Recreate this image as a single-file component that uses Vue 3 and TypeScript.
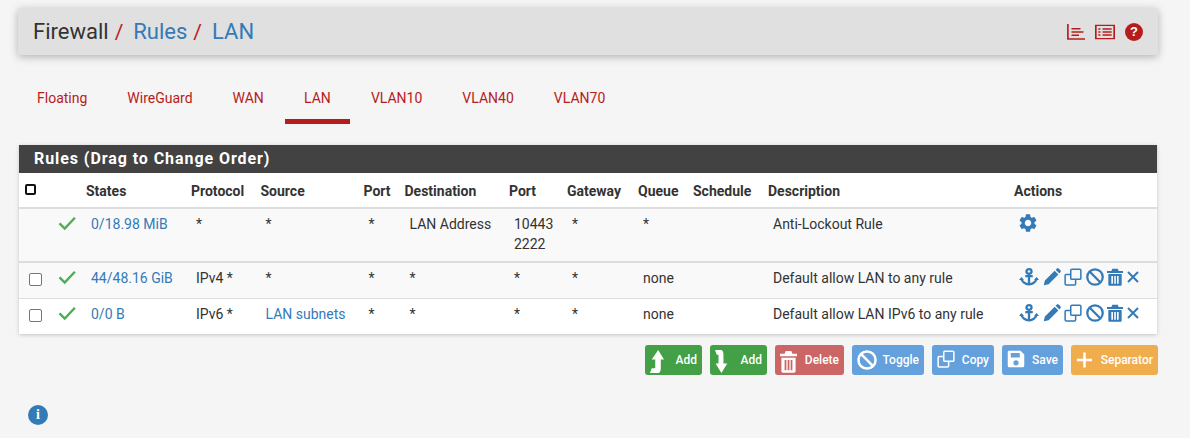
<script setup lang="ts">
interface Rule {
  box: boolean; states: string; proto: string; source: string; sourceLink: boolean; port: string;
  dest: string; dport: string[]; gateway: string; queue: string; desc: string; actions: string[];
}
const headers = ['', '', 'States', 'Protocol', 'Source', 'Port', 'Destination', 'Port', 'Gateway', 'Queue', 'Schedule', 'Description', 'Actions'];
const widths = [33, 29, 105, 69.5, 103, 41, 104.5, 58, 71, 55, 75, 246, 148];
const full = ['anchor', 'pencil', 'clone', 'ban', 'trash', 'times'];
const rules: Rule[] = [
  { box: false, states: '0/18.98 MiB', proto: '*', source: '*', sourceLink: false, port: '*', dest: 'LAN Address', dport: ['10443', '2222'], gateway: '*', queue: '*', desc: 'Anti-Lockout Rule', actions: ['cog'] },
  { box: true, states: '44/48.16 GiB', proto: 'IPv4 *', source: '*', sourceLink: false, port: '*', dest: '*', dport: ['*'], gateway: '*', queue: 'none', desc: 'Default allow LAN to any rule', actions: full },
  { box: true, states: '0/0 B', proto: 'IPv6 *', source: 'LAN subnets', sourceLink: true, port: '*', dest: '*', dport: ['*'], gateway: '*', queue: 'none', desc: 'Default allow LAN IPv6 to any rule', actions: full },
];
const tabs = ['Floating', 'WireGuard', 'WAN', 'LAN', 'VLAN10', 'VLAN40', 'VLAN70'];
const buttons = [
  { label: 'Add', icon: 'up', kind: 'green', gapw: 57 },
  { label: 'Add', icon: 'down', kind: 'green', gapw: 57 },
  { label: 'Delete', icon: 'trash', kind: 'red', gapw: 69 },
  { label: 'Toggle', icon: 'ban', kind: 'blue', gapw: 72 },
  { label: 'Copy', icon: 'clone', kind: 'blue', gapw: 62 },
  { label: 'Save', icon: 'save', kind: 'blue', gapw: 61 },
  { label: 'Separator', icon: 'plus', kind: 'orange', gapw: 87 },
];
</script>

<template>
  <div class="page">
    <svg class="defs" aria-hidden="true">
      <symbol id="i-cog" viewBox="2 2 20 20"><path fill="currentColor" d="M19.14 12.94c.04-.3.06-.61.06-.94 0-.32-.02-.64-.07-.94l2.03-1.58c.18-.14.23-.41.12-.61l-1.92-3.32c-.12-.22-.37-.29-.59-.22l-2.39.96c-.5-.38-1.03-.7-1.62-.94l-.36-2.54c-.04-.24-.24-.41-.48-.41h-3.84c-.24 0-.43.17-.47.41l-.36 2.54c-.59.24-1.13.57-1.62.94l-2.39-.96c-.22-.08-.47 0-.59.22L2.74 8.87c-.12.21-.08.47.12.61l2.03 1.58c-.05.3-.09.63-.09.94s.02.64.07.94l-2.03 1.58c-.18.14-.23.41-.12.61l1.92 3.32c.12.22.37.29.59.22l2.39-.96c.5.38 1.03.7 1.62.94l.36 2.54c.05.24.24.41.48.41h3.84c.24 0 .44-.17.47-.41l.36-2.54c.59-.24 1.13-.56 1.62-.94l2.39.96c.22.08.47 0 .59-.22l1.92-3.32c.12-.22.07-.47-.12-.61l-2.01-1.58zM12 15.6c-1.98 0-3.6-1.62-3.6-3.6s1.62-3.6 3.6-3.6 3.6 1.62 3.6 3.6-1.62 3.6-3.6 3.6z"/></symbol>
      <symbol id="i-anchor" viewBox="0 0 24 24" preserveAspectRatio="none"><g fill="none" stroke="currentColor" stroke-width="2.800"><circle cx="12" cy="4.500" r="3"/><path d="M12 7v15M7.500 10.800h9"/><path d="M2.800 14c.5 4.500 5 7.500 9.200 8 4.200-.5 8.700-3.500 9.200-8"/></g><path fill="currentColor" d="M0 16 2.800 12 6 16zM18 16 21.200 12 24 16z"/></symbol>
      <symbol id="i-pencil" viewBox="0 0 24 24"><path fill="currentColor" d="M1 23l1.500-6.500L15.500 3.500l5 5L7.500 21.500zM16.800 2.200 18.500.8c.8-.7 1.800-.7 2.500 0l2.200 2.200c.7.7.7 1.800 0 2.500l-1.400 1.700z"/></symbol>
      <symbol id="i-clone" viewBox="0 0 24 24"><g fill="none" stroke="currentColor" stroke-width="2"><rect x="9" y="1.500" width="13.500" height="13.500" rx="1.500"/><path d="M9 8.500H3c-.8 0-1.500.7-1.500 1.500v11c0 .8.7 1.500 1.500 1.500h11c.8 0 1.500-.7 1.500-1.500v-6"/></g></symbol>
      <symbol id="i-ban" viewBox="0 0 24 24"><g fill="none" stroke="currentColor" stroke-width="3"><circle cx="12" cy="12" r="10.300"/><path d="M5 5l14 14"/></g></symbol>
      <symbol id="i-trash" viewBox="0 0 24 24" preserveAspectRatio="none"><path fill="currentColor" fill-rule="evenodd" d="M8 1h8l1.500 3H24v2.500H0V4h6.500zM2 8h20v14c0 1-.8 1.800-1.800 1.800H3.800C2.800 23.800 2 23 2 22zM6.500 10.500v10.500h2.500V10.500zM10.800 10.500v10.500h2.500V10.500zM15 10.500v10.500h2.500V10.500z"/></symbol>
      <symbol id="i-times" viewBox="0 0 24 24"><path fill="none" stroke="currentColor" stroke-width="4" d="M2 2l20 20M22 2L2 22"/></symbol>
      <symbol id="i-check" viewBox="0 0 24 24"><path fill="none" stroke="currentColor" stroke-width="3.200" d="M2 12.500l7 7L22.500 5"/></symbol>
      <symbol id="i-up" viewBox="0 0 24 24" preserveAspectRatio="none"><path fill="currentColor" d="M14 0l10 10h-5.500v9c0 3-2 5-4.500 5H0l3-5h6V10H3z"/></symbol>
      <symbol id="i-down" viewBox="0 0 24 24" preserveAspectRatio="none"><path fill="currentColor" d="M0 0h10c3 0 4.500 2 4.500 5v9H21L11 24 1 14h5V5H3z"/></symbol>
      <symbol id="i-save" viewBox="0 0 24 24"><path fill="currentColor" fill-rule="evenodd" d="M3 1h15l5 5v15c0 1.200-.8 2-2 2H3c-1.200 0-2-.8-2-2V3c0-1.200.8-2 2-2zM5 4v6h12V4zM12 13.500a3.500 3.500 0 1 0 0 7 3.500 3.500 0 0 0 0-7z"/></symbol>
      <symbol id="i-plus" viewBox="0 0 24 24"><path fill="none" stroke="currentColor" stroke-width="4" d="M12 0v24M0 12h24"/></symbol>
      <symbol id="i-chart" viewBox="0 0 24 24" preserveAspectRatio="none"><path fill="none" stroke="currentColor" stroke-width="2.200" d="M1.200 0v22.500H24M6 7h12M6 12h16M6 17h10"/></symbol>
      <symbol id="i-list" viewBox="0 0 24 24" preserveAspectRatio="none"><path fill="none" stroke="currentColor" stroke-width="2" d="M1 2h22v20H1zM9 7.500h11M9 12h11M9 16.500h11M4 7.500h2.500M4 12h2.500M4 16.500h2.500"/></symbol>
    </svg>

    <header class="bar">
      <h1 class="crumbs">
        <span class="dark">Firewall</span><span class="sep">/</span>
        <a class="crumb">Rules</a><span class="sep">/</span>
        <a class="crumb">LAN</a>
      </h1>
      <div class="bar-icons">
        <svg class="ic-chart"><use href="#i-chart" /></svg>
        <svg class="ic-list"><use href="#i-list" /></svg>
        <span class="help">?</span>
      </div>
    </header>

    <nav class="tabs">
      <a v-for="t in tabs" :key="t" class="tab" :class="{ active: t === 'LAN' }">{{ t }}</a>
    </nav>

    <section class="panel">
      <h2 class="panel-title">Rules (Drag to Change Order)</h2>
      <table class="rules">
        <colgroup><col v-for="(w, i) in widths" :key="i" :style="{ width: w + 'px' }" /></colgroup>
        <thead>
          <tr>
            <th v-for="(h, i) in headers" :key="i">
              <span v-if="i === 0" class="box-head"></span>
              <template v-else>{{ h }}</template>
            </th>
          </tr>
        </thead>
        <tbody>
          <tr v-for="r in rules" :key="r.states">
            <td class="box-cell"><span v-if="r.box" class="box"></span></td>
            <td class="check-cell"><svg class="check"><use href="#i-check" /></svg></td>
            <td><a class="link">{{ r.states }}</a></td>
            <td>{{ r.proto }}</td>
            <td><a v-if="r.sourceLink" class="link">{{ r.source }}</a><template v-else>{{ r.source }}</template></td>
            <td>{{ r.port }}</td>
            <td>{{ r.dest }}</td>
            <td><div v-for="p in r.dport" :key="p">{{ p }}</div></td>
            <td>{{ r.gateway }}</td>
            <td>{{ r.queue }}</td>
            <td></td>
            <td>{{ r.desc }}</td>
            <td class="actions">
              <div class="action-row">
                <svg v-for="a in r.actions" :key="a" class="act" :class="'act-' + a"><use :href="'#i-' + a" /></svg>
              </div>
            </td>
          </tr>
        </tbody>
      </table>
    </section>

    <div class="btns">
      <button v-for="(b, i) in buttons" :key="i" class="btn" :class="b.kind" :style="{ width: b.gapw + 'px' }">
        <svg class="btn-ic" :class="'b-' + b.icon"><use :href="'#i-' + b.icon" /></svg><span>{{ b.label }}</span>
      </button>
    </div>

    <div class="info-row"><span class="info">i</span></div>
  </div>
</template>

<style>
html, body { margin: 0; background: #f5f5f5; }
</style>

<style scoped>
.page {
  width: 1190px; height: 438px; overflow: hidden; box-sizing: border-box; padding-top: 8px;
  background: #f5f5f5; font-family: Roboto, "Liberation Sans", sans-serif; font-size: 14px; color: #333;
  position: relative;
}
.defs { width: 0; height: 0; position: absolute; }
.bar {
  margin: 0 32px 0 18px; height: 47px; background: #e0e0e0; border-radius: 2px;
  box-shadow: 0 2px 8px rgba(0, 0, 0, .28); display: flex; align-items: center; justify-content: space-between;
  padding: 0 15px;
}
.crumbs { margin: 0; font-size: 22px; font-weight: 400; color: #333; display: flex; align-items: center; }
.sep { color: #b71c1c; margin: 0 10px 0 6px; font-size: 21px; }
.crumb { color: #337ab7; }
.bar-icons { display: flex; align-items: center; gap: 10px; color: #b71c1c; }
.ic-chart { width: 18px; height: 16px; }
.ic-list { width: 20px; height: 16px; }
.help {
  width: 18px; height: 18px; border-radius: 50%; background: #b71c1c; color: #fff; font: 700 13px/18px "Liberation Sans", sans-serif;
  text-align: center;
}
.tabs { display: flex; margin: 26px 0 0 17px; height: 43px; }
.tab { padding: 7px 20px 0; color: #b71c1c; font-size: 14px; line-height: 20px; height: 31px; border-bottom: 5px solid transparent; }
.tab.active { border-bottom-color: #b71c1c; margin: 0 .6px 0 .7px; padding: 7px 19.5px 0; }
.panel { margin: 21px 33px 0 19px; background: #fff; box-shadow: 0 1px 4px rgba(0, 0, 0, .2); }
.panel-title {
  margin: 0; height: 28px; background: #424242; color: #fff; font-size: 16px; font-weight: 700; line-height: 28px;
  padding-left: 15px; letter-spacing: .93px;
}
.rules { width: 1138px; table-layout: fixed; border-collapse: separate; border-spacing: 0; }
th {
  height: 36px; padding: 1px 5px 0; text-align: left; font-weight: 700; font-size: 14px; color: #333;
  border-bottom: 2px solid #ddd; box-sizing: border-box; white-space: nowrap; background: #fff;
}
td {
  padding: 5px 5px 0 10px; vertical-align: top; line-height: 20px; font-size: 14px; color: #333; white-space: nowrap;
  box-sizing: border-box; height: 36px; border-bottom: 1px solid #ddd;
}
tbody tr:nth-child(1) td { height: 54px; border-bottom-width: 2px; background: #f9f9f9; }
tbody tr:nth-child(2) td { background: #f9f9f9; }
tbody tr:nth-child(3) td { height: 35px; border-bottom: 0; background: #fff; }
.link { color: #337ab7; }
.box-head { display: block; width: 7px; height: 7px; border: 2px solid #111; border-radius: 2px; margin: -2px 0 0 1px; }
td.box-cell { padding: 10px 0 0 10px; }
.box { display: block; width: 11px; height: 11px; border: 1px solid #767676; border-radius: 2px; background: #fff; }
td.check-cell { padding: 5px 0 0 6px; }
.check { width: 18px; height: 18px; color: #4caf50; display: block; }
td.actions { padding: 5px 0 0 10px; }
.action-row { display: flex; align-items: flex-start; }
.act { color: #337ab7; flex: none; height: 18px; width: 18px; margin-right: 4px; }
.act-anchor { width: 20px; }
.act-clone { margin-right: 4px; margin-left: -1px; }
.act-ban { margin-right: 3px; }
.act-trash { width: 16px; }
.act-times { width: 12px; height: 12px; margin-top: 3px; }
.btns { display: flex; justify-content: flex-end; gap: 8px; margin: 11px 32px 0 0; }
.btn {
  height: 30px; border: 0; border-radius: 3px; color: #fff; font: 500 12px Roboto, sans-serif; display: flex; align-items: center;
  justify-content: space-between; padding: 0 5px; box-sizing: border-box;
}
.btn-ic { flex: none; width: 18px; height: 18px; align-self: flex-start; margin-top: 5px; }
.b-up, .b-down { width: 14px; height: 23px; }
.b-trash { width: 17px; height: 23px; }
.b-ban { width: 20px; height: 20px; }
.b-plus { width: 15px; height: 16px; margin: 7px 0 0 1px; }
.green { background: #43a047; }
.red { background: #cc6666; }
.blue { background: #64a0dc; }
.orange { background: #f0ad4e; }
.info-row { margin: 30px 0 0 28px; }
.info {
  display: block; width: 20px; height: 20px; border-radius: 50%; background: #337ab7; color: #fff;
  font: 700 14px/20px "Liberation Serif", serif; text-align: center;
}
</style>
